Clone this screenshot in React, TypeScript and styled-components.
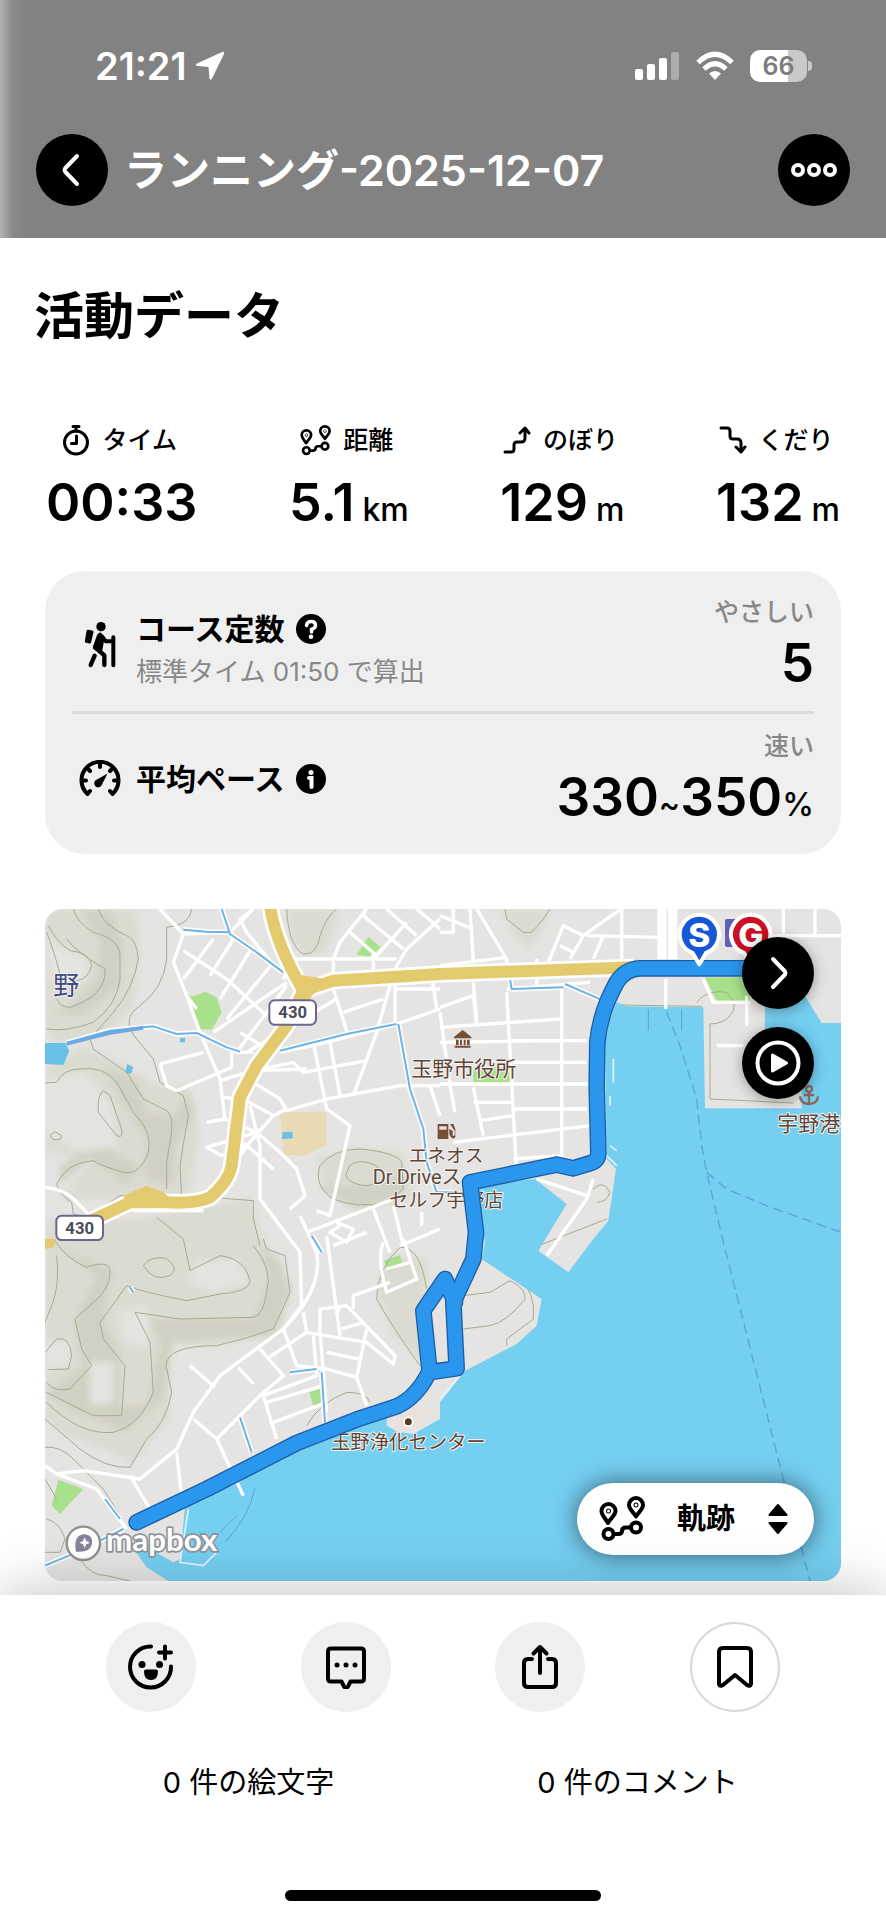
import React from 'react';
import styled, { createGlobalStyle } from 'styled-components';

const GlobalStyle = createGlobalStyle`
  * { box-sizing: border-box; }
  body {
    margin: 0;
    background: #fff;
    color: #000;
    font-family: Inter, "Noto Sans CJK JP", sans-serif;
  }
  button, select { font-family: inherit; color: inherit; }
`;

const Page = styled.div`
  display: flex;
  flex-direction: column;
  min-height: 100vh;
`;

const Header = styled.header`
  padding: 48px 0 32px;
  color: #fff;
  background: linear-gradient(90deg, #b4b4b4 0, #8c8c8c 12px, #828282 24px);
`;

const StatusBar = styled.div`
  display: flex;
  align-items: center;
  justify-content: space-between;
  height: 36px;
  padding: 0 74px 0 95px;
`;

const StatusGroup = styled.div<{ $gap: number }>`
  display: flex;
  align-items: center;
  gap: ${(p) => p.$gap}px;
`;

const Clock = styled.time`
  font-size: 38px;
  line-height: 36px;
  font-weight: 600;
`;

const Battery = styled.div`
  display: flex;
  align-items: center;
  gap: 1px;
`;

const BatteryBody = styled.div`
  width: 57px;
  border-radius: 10px;
  background: linear-gradient(90deg, #fff 66%, #c9c9c9 66%);
  color: #7c7c7c;
  font-size: 25px;
  line-height: 32px;
  font-weight: 600;
  text-align: center;
`;

const BatteryNub = styled.div`
  width: 4px;
  height: 10px;
  border-radius: 0 4px 4px 0;
  background: #c9c9c9;
`;

const TitleBar = styled.div`
  display: flex;
  align-items: center;
  gap: 16px;
  margin-top: 50px;
  padding: 0 36px;
`;

const ActivityName = styled.h1`
  flex: 1;
  margin: 0;
  font-size: 43px;
  line-height: 56px;
  font-weight: 600;
  white-space: nowrap;
`;

const RoundButton = styled.button`
  display: flex;
  flex: none;
  align-items: center;
  justify-content: center;
  width: 72px;
  height: 72px;
  padding: 0;
  border: 0;
  border-radius: 50%;
  background: #000;
`;

const Main = styled.main`
  flex: 1;
  padding: 48px 0 13px;
`;

const SectionTitle = styled.h2`
  margin: 0 34px;
  font-size: 50px;
  line-height: 60px;
  font-weight: 700;
`;

const Metrics = styled.dl`
  display: flex;
  justify-content: space-between;
  margin: 76px 46px 38px;
`;

const Metric = styled.div`
  display: flex;
  flex-direction: column;
  align-items: center;
  gap: 15px;
`;

const MetricLabel = styled.dt`
  display: flex;
  align-items: center;
  gap: 12px;
  padding-right: 4px;
  font-size: 25px;
  line-height: 36px;
  font-weight: 500;
`;

const MetricValue = styled.dd`
  margin: 0;
  font-size: 52px;
  line-height: 60px;
  font-weight: 600;
  white-space: nowrap;
`;

const Unit = styled.span<{ $spaced?: boolean }>`
  margin-left: ${(p) => (p.$spaced ? 8 : 0)}px;
  font-size: 32px;
  line-height: 30px;
  font-weight: 500;
`;

const Card = styled.section`
  margin: 0 45px;
  padding: 9px 27px;
  border-radius: 40px;
  background: #efefef;
`;

const CardRow = styled.div`
  display: flex;
  align-items: center;
  justify-content: space-between;
  padding: 16px 0 18px;

  & + & { border-top: 3px solid #dadada; }
`;

const RowLead = styled.div`
  display: flex;
  align-items: center;
  gap: 15px;
  padding-left: 7px;
`;

const IconSlot = styled.span`
  display: flex;
  justify-content: center;
  width: 42px;
`;

const RowHeading = styled.div`
  display: flex;
  align-items: center;
  gap: 11px;
  font-size: 30px;
  line-height: 36px;
  font-weight: 700;
`;

const RowNote = styled.div`
  padding-top: 7px;
  color: #888;
  font-size: 26px;
  line-height: 36px;
`;

const RowText = styled.div<{ $stacked?: boolean }>`
  padding-top: ${(p) => (p.$stacked ? 12 : 0)}px;
`;

const HelpButton = styled.button`
  display: flex;
  padding: 0;
  border: 0;
  background: none;
`;

const RowResult = styled.div`
  display: flex;
  flex-direction: column;
  align-items: flex-end;
  gap: 5px;
`;

const Rating = styled.span`
  color: #888;
  font-size: 25px;
  line-height: 32px;
  font-weight: 500;
`;

const RowValue = styled.span`
  font-size: 53px;
  line-height: 60px;
  font-weight: 600;
`;

const MapPanel = styled.section`
  position: relative;
  height: 672px;
  margin: 55px 45px 0;
  border-radius: 18px;
  overflow: hidden;
  background: #e5e4e0;
`;

const MapDrawing = styled.svg`
  display: block;
  width: 100%;
  height: 100%;
`;

const MapButtons = styled.div`
  position: absolute;
  top: 28px;
  right: 27px;
  display: flex;
  flex-direction: column;
  gap: 18px;

  ${RoundButton} { box-shadow: 0 2px 14px rgba(0, 0, 0, 0.35); }
`;

const LayerPicker = styled.label`
  position: absolute;
  right: 27px;
  bottom: 26px;
  display: flex;
  align-items: center;
  justify-content: space-between;
  width: 237px;
  height: 72px;
  padding: 0 26px 0 22px;
  border-radius: 36px;
  background: #fff;
  box-shadow: 0 0 24px rgba(0, 0, 0, 0.55);
`;

const LayerSelect = styled.select`
  appearance: none;
  padding: 0;
  border: 0;
  background: none;
  font-size: 29px;
  line-height: 40px;
  font-weight: 700;
`;

const Footer = styled.footer`
  position: relative;
  display: flex;
  flex-direction: column;
  align-items: center;
  padding: 27px 54px 19px;
  background: #fff;
  box-shadow: 0 0 56px rgba(0, 0, 0, 0.26);
`;

const Actions = styled.div`
  display: grid;
  grid-template-columns: repeat(4, 1fr);
  justify-items: center;
  width: 100%;
`;

const ActionButton = styled.button<{ $outlined?: boolean }>`
  display: flex;
  align-items: center;
  justify-content: center;
  width: 90px;
  height: 90px;
  padding: 0;
  border: ${(p) => (p.$outlined ? '2px solid #d8d8d8' : '0')};
  border-radius: 50%;
  background: ${(p) => (p.$outlined ? '#fff' : '#efefef')};
`;

const Counts = styled.div`
  display: grid;
  grid-template-columns: repeat(2, 1fr);
  justify-items: center;
  width: 100%;
  margin: 51px 0 87px;
`;

const CountLink = styled.a`
  color: #000;
  font-size: 29px;
  line-height: 40px;
  text-decoration: none;
`;

const HomeIndicator = styled.div`
  width: 316px;
  height: 11px;
  border-radius: 6px;
  background: #000;
`;

const line = {
  fill: 'none',
  stroke: 'currentColor',
  strokeLinecap: 'round' as const,
  strokeLinejoin: 'round' as const,
};

const LocationArrow = () => (
  <svg width="30" height="30" viewBox="0 0 30 30" aria-hidden="true">
    <path d="M27 1 2 12.500Q-.5 14 2.500 15L13.500 16 14.500 27.500Q15.500 30 17 27.500L29 3Q29.500 0 27 1Z" fill="#fff" />
  </svg>
);

const SignalIcon = () => (
  <svg width="45" height="30" viewBox="0 0 45 30" aria-hidden="true" fill="#fff">
    <rect x="0" y="18" width="8" height="11" rx="2" />
    <rect x="12" y="13" width="8" height="16" rx="2" />
    <rect x="24" y="7" width="8" height="22" rx="2" />
    <rect x="36" y="1" width="8" height="28" rx="2" opacity="0.35" />
  </svg>
);

const WifiIcon = () => (
  <svg width="38" height="30" viewBox="0 0 38 30" aria-hidden="true">
    <g fill="none" stroke="#fff" strokeWidth="5">
      <path d="M2 11.500Q19-5 36 11.500" />
      <path d="M8 18Q19 7.500 30 18" />
    </g>
    <path d="M13 22.500Q19 17.500 25 22.500L19 29Z" fill="#fff" />
  </svg>
);

const StopwatchIcon = () => (
  <svg width="28" height="32" viewBox="0 0 28 32" aria-hidden="true" {...line} strokeWidth="3">
    <circle cx="14" cy="18.500" r="11.500" />
    <path d="M11 2.500h6M14 3v4M14.500 12v7.500H9.500" />
  </svg>
);

const RouteIcon = ({ size }: { size: number }) => (
  <svg width={size} height={size} viewBox="0 0 46 46" aria-hidden="true" {...line} strokeWidth="4">
    <path d="M9 27C6 22 2.500 19 2.500 15a7 7 0 0 1 14 0C16.500 19 12 22 9 27Z" />
    <path d="M37 20.500C34 16 30 13 30 9a7 7 0 0 1 14 0C44 13 40 16 37 20.500Z" />
    <circle cx="9.500" cy="38" r="5" />
    <circle cx="37" cy="31.500" r="5" />
    <path d="M15 38h4Q23 38 23 35 23 31.500 27 31.500h4" />
    <circle cx="9.500" cy="15" r="0.500" />
    <circle cx="37" cy="9" r="0.500" />
  </svg>
);

const ClimbIcon = () => (
  <svg width="28" height="28" viewBox="0 0 28 28" aria-hidden="true" {...line} strokeWidth="3">
    <path d="M2 26h6q3 0 3-3v-4q0-3 3-3h4q4 0 4-4V3M17 7l5-5 4 5" />
  </svg>
);

const DescentIcon = () => (
  <svg width="28" height="28" viewBox="0 0 28 28" aria-hidden="true" {...line} strokeWidth="3">
    <path d="M2 2h6q3 0 3 3v5q0 3 3 3h4q4 0 4 4v8M17 21l5 5 4-5" />
  </svg>
);

const HikerIcon = () => (
  <svg width="33" height="47" viewBox="70 67 99 141" aria-hidden="true" {...line}>
    <circle cx="121" cy="84" r="14" fill="currentColor" stroke="none" />
    <path d="M82 98 94 100 87 130 77 128Z" fill="currentColor" strokeWidth="9" />
    <path d="M116 112 124 116 118 152 104 146Z" fill="currentColor" strokeWidth="15" />
    <path d="M118 108 136 128H157M158 116V200" strokeWidth="12" />
    <path d="M106 148 131 170V199M102 171 90 199" strokeWidth="13" />
  </svg>
);

const GaugeIcon = () => (
  <svg width="42" height="38" viewBox="0 0 42 38" aria-hidden="true" {...line} strokeWidth="4">
    <path d="M8.500 34A18.500 18.500 0 1 1 33.500 34L31 31M8.500 34l2.500-3" />
    <path strokeWidth="4" d="M21 3v4M4 20.500h3M35 20.500h3M9 9l2 2M33 9l-2 2" />
    <path fill="currentColor" stroke="none" d="M28.500 13.500 18 19.500a4 4 0 1 0 5 5Z" />
  </svg>
);

const QuestionIcon = () => (
  <svg width="30" height="30" viewBox="0 0 30 30" aria-hidden="true">
    <circle cx="15" cy="15" r="15" fill="#000" />
    <path d="M10.500 11.500Q11 7.500 15 7.500 19.500 7.500 19.500 11.500 19.500 14 15.500 15.500V18" fill="none" stroke="#fff" strokeWidth="3.500" strokeLinecap="round" />
    <circle cx="15" cy="22.800" r="2.300" fill="#fff" />
  </svg>
);

const InfoIcon = () => (
  <svg width="30" height="30" viewBox="0 0 30 30" aria-hidden="true">
    <circle cx="15" cy="15" r="15" fill="#000" />
    <circle cx="15" cy="8.500" r="2.500" fill="#fff" />
    <path d="M13 14h2.500v9" fill="none" stroke="#fff" strokeWidth="4" strokeLinecap="round" />
  </svg>
);

const ReactionIcon = () => (
  <svg width="48" height="48" viewBox="0 0 48 48" aria-hidden="true" {...line} strokeWidth="4">
    <path d="M24 3.500A20.500 20.500 0 1 0 44 23.500M38 3.500v12M32 9.500h12" />
    <circle cx="15" cy="21.500" r="3.500" fill="currentColor" stroke="none" />
    <circle cx="32.500" cy="21.500" r="3.500" fill="currentColor" stroke="none" />
    <path d="M19 28.500h10Q29 35 24 35 19 35 19 28.500Z" fill="currentColor" />
  </svg>
);

const CommentIcon = () => (
  <svg width="44" height="44" viewBox="0 0 44 44" aria-hidden="true" {...line} strokeWidth="4">
    <path d="M7 3.500h30q3 0 3 3v27q0 3-3 3H26.500L24 41.500q-2 3-4 0L17.500 36.500H7q-3 0-3-3v-27q0-3 3-3Z" />
    <g fill="currentColor" stroke="none">
      <circle cx="13" cy="20" r="2.500" />
      <circle cx="22" cy="20" r="2.500" />
      <circle cx="31" cy="20" r="2.500" />
    </g>
  </svg>
);

const ShareIcon = () => (
  <svg width="44" height="46" viewBox="0 0 44 46" aria-hidden="true" {...line} strokeWidth="4">
    <path d="M14 15h-4q-4 0-4 4v20q0 4 4 4h24q4 0 4-4V19q0-4-4-4h-4M22 29V3.500M15.500 9.500 22 3l6.500 6.500" />
  </svg>
);

const BookmarkIcon = () => (
  <svg width="44" height="46" viewBox="0 0 44 46" aria-hidden="true" {...line} strokeWidth="4">
    <path d="M10 4h24q4 0 4 4v32q-1 3-4 1L22 31 10 41q-3 2-4-1V8q0-4 4-4Z" />
  </svg>
);

const hillShade = [
  'M15 30H290L300 150 280 330 200 400 60 440 15 400Z',
  'M15 510 130 440 260 500 360 560 440 560 480 700 450 880 300 900 60 900 160 780 15 760Z',
  'M15 960 300 960 480 920 640 900 660 1000 760 1160 720 1300 540 1340 390 1340 390 1560 280 1690 60 1600 15 1560Z',
  'M740 30H900L860 160 800 180 760 130Z',
  'M830 780 940 745 1090 760 1120 900 940 930 850 880Z',
  'M1380 30H1530L1500 110 1460 150 1420 110Z',
  'M1010 1170 1050 1070 1160 1080 1160 1400 1060 1310Z',
];

const hillDeep = [
  'M120 30H210L250 130 240 260 130 350 30 340 90 320 170 240 180 130Z',
  'M190 500 290 540 320 640 400 650 450 580 470 640 410 740 400 860 310 840 320 720 240 600Z',
  'M20 1020 110 1070 220 1110 190 1260 240 1360 240 1520 320 1520 360 1340 330 1260 640 1260 690 1130 650 1040 720 1080 750 1180 700 1310 400 1330 370 1500 260 1600 100 1540 15 1480 130 1400 100 1270 170 1130Z',
  'M260 860 150 780 60 860 60 800 160 730 300 800Z',
  'M840 860 1000 860 1100 820 1080 900 950 930Z',
];

const hillLight = [
  'M20 120 100 160 150 190 130 260 30 250Z',
  'M15 540 130 520 220 620 230 740 120 760 15 700Z',
  'M230 1240 320 1220 330 1350 250 1330Z',
  'M150 1390 220 1390 220 1510 150 1520Z',
  'M470 1090 590 1080 630 1150 520 1180 440 1150Z',
  'M20 1330 90 1330 90 1400 20 1410Z',
];

const contours = [
  'M100 30Q110 70 160 100 240 120 240 170V240Q230 320 160 370 80 400 20 390',
  'M175 30Q190 80 260 110 290 120 295 180 280 270 220 340L150 420 160 450 260 520 310 600 380 635Q400 650 395 700L380 790V870',
  'M25 80Q50 130 90 155 150 160 155 200 145 240 110 245L60 225Q40 150 20 100',
  'M50 300Q60 325 90 325 200 290 195 210 110 160 80 120',
  'M455 30Q450 80 380 85V180Q370 270 300 320 240 360 290 420L340 480 360 550 430 590 445 650Q430 730 420 800L425 895',
  'M15 552 50 550Q70 510 120 510 190 500 230 550L280 640Q340 700 325 760 300 830 250 820 180 800 160 785 80 790 50 855',
  'M190 575Q170 590 175 640L230 710Q250 720 245 690L210 590Z',
  'M30 710 45 698 65 710 60 722 40 722Z',
  'M50 855Q60 890 95 910L100 945 140 955 240 890 390 895 440 890 640 905 640 960 660 1040',
  'M740 30Q745 140 790 165 830 170 840 110 860 50 890 30',
  'M920 820Q930 780 980 790 1030 800 1030 840 990 870 950 855 910 840 920 820Z',
  'M840 800Q880 750 960 750 1070 760 1085 790L1090 870 1040 910Q950 930 880 900 820 860 840 800Z',
  'M1395 30 1400 60 1450 100 1475 100 1510 60 1530 30',
  'M40 1020Q80 1080 140 1105 210 1080 210 1120 210 1170 160 1210L105 1260 125 1350 155 1400 90 1470Q40 1480 20 1450',
  'M50 1070Q60 1160 35 1220L15 1270',
  'M15 1360 50 1320Q90 1310 95 1370L85 1410 25 1412',
  'M640 1040Q700 1110 680 1180 670 1250 640 1255L420 1260 285 1240 330 1330 340 1480Q300 1580 220 1600 120 1610 20 1510',
  'M310 1100Q330 1070 380 1078 420 1110 390 1130 340 1150 310 1100Z',
  'M350 955 430 1020 450 1115 540 1070Q620 1080 630 1150 620 1180 540 1185L440 1205Q310 1180 260 1160L180 1270 190 1320 255 1400 245 1550 160 1550 20 1480',
  'M670 1020 680 1050 735 1070 750 1180 700 1290Q620 1320 530 1340 380 1340 378 1400L395 1480Q380 1570 320 1620L270 1705Q200 1710 120 1650L15 1560',
  'M15 1645Q60 1640 100 1680L190 1770 240 1850',
  'M20 1860Q60 1870 75 1920L60 1960 15 1960M120 1980Q150 2030 200 2030L270 2046M15 1740 50 1800',
  'M800 1580Q840 1510 920 1480 980 1480 990 1510',
  'M1160 1170Q1140 1040 1080 1045 1010 1110 1010 1200 1060 1290 1140 1400',
  'M1270 1190 1350 1180 1410 1145Q1460 1170 1455 1200 1400 1270 1350 1280L1270 1290',
  'M1740 318 1985 322M1970 310Q2000 270 2060 280 2100 320 2070 350 2050 375 2010 375V600L2260 612',
  'M1660 870Q1690 840 1710 880 1700 910 1670 910M1495 1040 1700 960',
  'M1325 1080 1430 1130Q1490 1180 1480 1260L1400 1320V1340',
];

const minorRoads = [
  'M360 30 430 105 400 190 440 290 480 400 540 540 555 660 650 700 720 760 770 810 795 890 750 930',
  'M430 105 570 100 640 30M430 155 560 240 680 350M520 120 430 240M580 120 510 230M640 140 540 300M700 190 560 360M740 250 520 400M640 30 600 60 620 100 660 150 720 220',
  'M440 290 470 330M480 400 590 460H640M590 460 740 260M620 460 890 300M720 460 860 430 1070 375',
  'M700 460 600 400M880 270 925 410M910 340 1030 300M1050 260 1010 400 940 590M870 430 900 590M820 430 860 630 930 680 870 950 830 935',
  'M730 240 760 180 860 180H1070M880 240 880 180 900 130 980 30M1000 210V160M1065 380V210L1100 150 1200 60M970 50 1090 150M1040 30 1130 110M1130 30 1200 90M930 100 1010 170 1100 70',
  'M360 495 490 460M360 495 380 560 410 575 575 505 575 460M540 545 640 515 800 510M640 550 720 600 740 635 860 600 1080 560 1200 560M550 595 610 600 700 650M555 660 500 670M650 700 500 745 545 770 620 740 700 650 740 630',
  'M640 515 760 490 790 520 980 485M630 620 660 740 660 900 720 980 780 1060 785 1220 730 1290M610 730 700 810M660 690 600 770',
  'M1070 375 1200 330M1065 270H1200M1175 230 1190 330M1170 560 1200 650M800 1000 1060 900M780 950 830 1060Q850 1170 730 1290M1000 930 1050 1060M1060 920 1090 1040M1145 980V940M890 970 940 990 920 1030 870 1000 900 980M1080 1040 1200 990',
  'M15 865Q80 870 120 920L150 950M490 935 280 935M860 1010 900 1310M880 1040 980 1000M1030 1030Q1010 1080 1040 1180L1130 1140 1090 1020M940 1230V1190L1050 1150M1040 1110 1110 1090',
  'M730 1290 540 1430 460 1540 410 1650 300 1740 130 1715 50 1725 15 1700M50 1725 170 1770 260 1890M450 1400 525 1465M595 1405 640 1455M660 1350 730 1430 660 1490 530 1620 460 1560M730 1290 770 1400 860 1410 950 1435M790 1240 800 1300 980 1330 1060 1395 1065 1370 920 1220 840 1230 840 1300 860 1540M800 1300 680 1380M860 1360 955 1380M980 1290 950 1435 980 1520M820 1310 830 1430 670 1490 710 1620M680 1510 850 1460M700 1570 860 1510M530 1620 610 1790M410 1660 425 1790M270 1730 330 1830M905 1290 970 1270M895 1240V1220',
  'M1200 100H1240V30M1290 30 1300 190M1200 200 1400 175M1310 30 1400 180V240M1200 325 1300 290 1310 375M1200 50 1300 90M1400 280 1430 820M1300 250 1310 370M1200 385 1560 360M1200 430 1560 425M1420 490H1640M1410 425H1640M1200 555H1650M1300 565 1330 710M1300 610H1420M1420 630H1640M1320 665 1420 650M1240 730 1650 680M1565 260V780M1400 270 1650 250M1420 780 1560 770M1200 340 1230 560 1245 640',
  'M1525 190 1570 80 1630 110 1700 60 1745 30M1630 110 1590 180M1690 110 1660 180M1640 110 1860 115M1745 30V180M1870 30V180M1560 140 1600 160M1660 840 1640 900 1520 1070M1490 840 1640 890M1877 240V330M1990 240 2020 310H2130M2030 440H2110M2120 290V380M2160 110H2403M2230 30V110M2325 30V110M1490 180V260',
];

const streams = [
  'M545 30 570 105 650 160 730 220',
  'M430 92 500 98 570 100',
  'M80 432 210 395 340 382 410 405 470 402 560 445 600 458M720 455 800 435 920 405 1070 375',
  'M1075 375 1110 570 1150 690 1160 790 1190 880 1250 880',
  'M815 1010 845 1060M270 1165 280 1180',
  'M600 1555 635 1660M845 1420 855 1570M750 1420 830 1410',
  'M15 2000 110 1960 250 1890M195 1800 240 1860',
  'M1410 240 1415 270 1570 265M1575 255 1690 305',
];

const shorelines = [
  'M445 1830 420 1990 490 2000 530 1960',
  'M1200 1500 1260 1430M1720 480V550M1710 590V620M1710 740 1730 755M1700 770 1730 800',
];

const route =
  'M290 1870 500 1770 770 1632 960 1558 1070 1522Q1130 1495 1167 1420L1250 1408 1240 1210 1300 1080 1308 1000 1290 850 1550 797 1600 808 1650 793Q1676 785 1675 760L1670 560 1672 430Q1680 340 1730 250 1755 210 1800 208H2250';
const routeLoop = 'M1168 1410 1150 1235 1215 1140 1245 1210';

function ActivityMap() {
  return (
    <MapDrawing viewBox="15 30 2388 2016" preserveAspectRatio="xMidYMid slice" role="img" aria-label="活動の軌跡">
      <defs>
        <filter id="softHill">
          <feGaussianBlur stdDeviation="9" />
        </filter>
      </defs>
      <rect x="0" y="0" width="2500" height="2100" fill="#e5e4e2" />
      <g filter="url(#softHill)">
        <g fill="#dcdbd2">{hillShade.map((d) => <path key={d} d={d} />)}</g>
        <g fill="#cfcfc0" opacity="0.8">{hillDeep.map((d) => <path key={d} d={d} />)}</g>
        <g fill="#e4e4e0">{hillLight.map((d) => <path key={d} d={d} />)}</g>
      </g>
      <g fill="#a8e08b">
        <path d="M440 290 460 292 495 278 530 295 545 340 515 392 475 390Z" />
        <path d="M985 113 1022 145 990 172 950 168Z" />
        <path d="M55 1742 130 1770 60 1845 35 1820Z" />
        <path d="M1032 1085 1080 1068 1088 1098 1045 1118Z" />
        <path d="M808 1480 845 1468 850 1520 820 1522Z" />
        <path d="M1300 505H1412V552H1300Z" />
        <path d="M1995 235H2130V305H2030Z" />
      </g>
      <path d="M720 640 860 640 858 740 790 770 730 768Z" fill="#e8dab4" />
      <g fill="none" stroke="#a6ab90" strokeWidth="3">
        {contours.map((d) => <path key={d} d={d} />)}
      </g>
      <path
        d="M1730 310 1760 322 1990 325 1995 628 2285 628 2285 560 2175 400 2175 300 2295 290 2345 372 2403 372 2403 2046 385 2046 320 2005 285 1955 330 1950 400 1990 420 1980 435 1820 600 1750 740 1640 1040 1530 1040 1580 1075 1600 1120 1605 1200 1560 1200 1510 1275 1415 1430 1335 1490 1280 1505 1200 1400 1130 1325 1080 1335 1030 1310 930 1290 860 1485 840 1580 915 1495 1055 1585 1120 1660 1020 1705 965 1728 810 1700 780 1695 400Z"
        fill="#75cff1"
      />
      <g fill="none" stroke="#fff" strokeWidth="16" strokeLinejoin="round" opacity="0.9">
        {streams.map((d) => <path key={d} d={d} />)}
      </g>
      <g fill="none" stroke="#fff" strokeWidth="10" strokeLinejoin="round">
        {minorRoads.map((d) => <path key={d} d={d} />)}
      </g>
      <g fill="none" stroke="#6db4e4" strokeWidth="6" strokeLinejoin="round">
        {streams.map((d) => <path key={d} d={d} />)}
      </g>
      <g fill="#68bfe8">
        <path d="M15 432 75 432 88 455 70 498 15 495Z" />
        <path d="M262 495 280 505 272 525 256 520Z" />
        <path d="M728 700 758 698 758 718 726 720Z" />
        <path d="M420 417H435V430H420Z" />
        <path d="M80 440 80 428 210 395 310 380 310 392 210 407Z" fill="#6ca9e2" />
      </g>
      <g fill="none" stroke="#e6f3fb" strokeWidth="5">
        {shorelines.map((d) => <path key={d} d={d} />)}
      </g>
      <g fill="none" stroke="#58a4da" strokeWidth="4" strokeDasharray="30 16">
        <path d="M1880 340 1920 440 1970 600 1985 740 2000 820 2050 1030 2230 1740 2310 2046" />
        <path d="M2000 820 2060 870 2180 920 2403 1000" />
      </g>
      <path d="M1825 330V395M1925 330V395M645 1765Q630 1850 555 1930M590 1850 540 1900" fill="none" stroke="#58a4da" strokeWidth="3" />
      <path d="M1866 30V180M1898 30V180" stroke="#fff" strokeWidth="28" />
      <g fill="none" strokeLinejoin="round">
        <g stroke="#fff" strokeWidth="52">
          <path d="M690 20Q705 130 790 275L880 245 1200 225 1780 205" />
          <path d="M790 275 740 380 650 500 600 595 575 800Q565 850 510 895 470 915 380 910L270 910 100 990" />
        </g>
        <g stroke="#e4ca6e" strokeWidth="36">
          <path d="M690 20Q705 130 790 275L880 245 1200 225 1780 205" />
          <path d="M790 275 740 380 650 500 600 595 575 800Q565 850 510 895 470 915 380 910L270 910 100 990" />
        </g>
      </g>
      <path d="M765 225 860 240 800 310 770 300ZM250 890 320 860 370 880 400 905 260 920ZM15 1020H50L40 1045 15 1050Z" fill="#e4ca6e" />
      <path d="M1050 1565 1130 1530 1170 1535 1150 1570 1080 1590Z" fill="#eae2da" />
      <circle cx="1105" cy="1568" r="13" fill="#5b3a26" stroke="#fff" strokeWidth="5" />

      <g fill="#754e36">
        <path d="M1242 414 1268 393 1294 414V418H1242ZM1248 422H1256V438H1248ZM1260 422H1266V438H1260ZM1271 422H1277V438H1271ZM1281 422H1289V438H1281ZM1244 440H1292V446H1244Z" />
        <path d="M1193 675H1225V720H1193ZM1228 690 1238 695V710Q1246 715 1244 695L1230 675 1240 675 1246 690V715Q1236 725 1228 705Z" />
      </g>
      <path d="M1198 682H1220V692H1198Z" fill="#e5e4e2" />
      <g fill="none" stroke="#8a6a5a" strokeWidth="7">
        <circle cx="2307" cy="570" r="9" />
        <path d="M2307 580V615M2292 588H2322M2280 592Q2282 614 2307 615 2332 614 2334 592" />
      </g>

      <g fontFamily='Roboto, "Noto Sans CJK JP", sans-serif' fill="#5e4637" stroke="#f4f3f1" strokeWidth="6" paintOrder="stroke" strokeLinejoin="round">
        <text x="1271" y="530" fontSize="63" textAnchor="middle">玉野市役所</text>
        <text x="1218" y="790" fontSize="56" textAnchor="middle">エネオス</text>
        <text x="998" y="855" fontSize="60">Dr.Driveス</text>
        <text x="1048" y="925" fontSize="57">セルフ宇野店</text>
        <text x="1105" y="1650" fontSize="58" textAnchor="middle">玉野浄化センター</text>
        <text x="2306" y="697" fontSize="63" textAnchor="middle">宇野港</text>
        <text x="118" y="288" fontSize="78" textAnchor="end" fill="#3f4a80">野</text>
      </g>

      <g fill="#fff" stroke="#6a678c" strokeWidth="6">
        <rect x="688" y="304" width="140" height="73" rx="16" />
        <rect x="49" y="950" width="140" height="73" rx="16" />
      </g>
      <g fontFamily="Roboto, sans-serif" fontSize="50" fontWeight="700" fill="#4b4b5a" textAnchor="middle">
        <text x="758" y="358">430</text>
        <text x="119" y="1004">430</text>
      </g>

      <g fill="none" strokeLinecap="round" strokeLinejoin="round">
        <g stroke="#1c5fa6" strokeWidth="50">
          <path d={route} />
          <path d={routeLoop} />
        </g>
        <g stroke="#2b96ee" strokeWidth="42">
          <path d={route} />
          <path d={routeLoop} />
        </g>
      </g>

      <rect x="2055" y="60" width="60" height="84" rx="6" fill="#5f62b4" />
      <g stroke="#fff" strokeWidth="12" strokeLinejoin="round">
        <path d="M1978 196 1958 162A59 59 0 1 1 1998 162Z" fill="#1557d6" />
        <path d="M2132 196 2112 162A59 59 0 1 1 2152 162Z" fill="#cc0f22" />
      </g>
      <g fontFamily="Inter, sans-serif" fontSize="100" fontWeight="800" fill="#fff" textAnchor="middle">
        <text x="1978" y="143">S</text>
        <text x="2132" y="143">G</text>
      </g>

      <circle cx="130" cy="1933" r="50" fill="#fff" stroke="#8f8f8f" strokeWidth="7" />
      <path d="M108 1958Q98 1907 135 1906 160 1910 156 1935 150 1962 108 1958Z" fill="#85849a" />
      <path d="M134 1915 139 1926 150 1931 139 1936 134 1947 129 1936 118 1931 129 1926Z" fill="#fff" />
      <text x="198" y="1957" fontFamily="Lato, sans-serif" fontSize="94" fontWeight="700" fill="#fff" stroke="#8d9398" strokeWidth="10" paintOrder="stroke" strokeLinejoin="round">
        mapbox
      </text>
    </MapDrawing>
  );
}

const metrics = [
  { label: 'タイム', icon: <StopwatchIcon />, value: '00:33', unit: '' },
  { label: '距離', icon: <RouteIcon size={31} />, value: '5.1', unit: 'km' },
  { label: 'のぼり', icon: <ClimbIcon />, value: '129', unit: 'm' },
  { label: 'くだり', icon: <DescentIcon />, value: '132', unit: 'm' },
];

export default function App() {
  return (
    <Page>
      <GlobalStyle />
      <Header>
        <StatusBar>
          <StatusGroup $gap={8}>
            <Clock>21:21</Clock>
            <LocationArrow />
          </StatusGroup>
          <StatusGroup $gap={16}>
            <SignalIcon />
            <WifiIcon />
            <Battery>
              <BatteryBody>66</BatteryBody>
              <BatteryNub />
            </Battery>
          </StatusGroup>
        </StatusBar>
        <TitleBar>
          <RoundButton aria-label="戻る">
            <svg width="36" height="36" viewBox="0 0 36 36" fill="none" stroke="#fff" strokeWidth="4" strokeLinecap="round" strokeLinejoin="round">
              <path d="M23 4 11 16.500q-1 1.500 0 3L23 32" />
            </svg>
          </RoundButton>
          <ActivityName>ランニング-2025-12-07</ActivityName>
          <RoundButton aria-label="メニュー">
            <svg width="48" height="16" viewBox="0 0 48 16" fill="none" stroke="#fff" strokeWidth="4">
              <circle cx="8" cy="8" r="5" />
              <circle cx="24" cy="8" r="5" />
              <circle cx="40" cy="8" r="5" />
            </svg>
          </RoundButton>
        </TitleBar>
      </Header>

      <Main>
        <SectionTitle>活動データ</SectionTitle>
        <Metrics>
          {metrics.map((m) => (
            <Metric key={m.label}>
              <MetricLabel>
                {m.icon}
                {m.label}
              </MetricLabel>
              <MetricValue>
                {m.value}
                {m.unit && <Unit $spaced>{m.unit}</Unit>}
              </MetricValue>
            </Metric>
          ))}
        </Metrics>

        <Card>
          <CardRow>
            <RowLead>
              <IconSlot>
                <HikerIcon />
              </IconSlot>
              <RowText $stacked>
                <RowHeading>
                  コース定数
                  <HelpButton aria-label="コース定数について">
                    <QuestionIcon />
                  </HelpButton>
                </RowHeading>
                <RowNote>標準タイム 01:50 で算出</RowNote>
              </RowText>
            </RowLead>
            <RowResult>
              <Rating>やさしい</Rating>
              <RowValue>5</RowValue>
            </RowResult>
          </CardRow>
          <CardRow>
            <RowLead>
              <IconSlot>
                <GaugeIcon />
              </IconSlot>
              <RowText>
                <RowHeading>
                  平均ペース
                  <HelpButton aria-label="平均ペースについて">
                    <InfoIcon />
                  </HelpButton>
                </RowHeading>
              </RowText>
            </RowLead>
            <RowResult>
              <Rating>速い</Rating>
              <RowValue>
                330<Unit>~</Unit>350<Unit>%</Unit>
              </RowValue>
            </RowResult>
          </CardRow>
        </Card>

        <MapPanel>
          <ActivityMap />
          <MapButtons>
            <RoundButton aria-label="地図を開く">
              <svg width="36" height="36" viewBox="0 0 36 36" fill="none" stroke="#fff" strokeWidth="4" strokeLinecap="round" strokeLinejoin="round">
                <path d="M13 4 25 16.500q1 1.500 0 3L13 32" />
              </svg>
            </RoundButton>
            <RoundButton aria-label="再生">
              <svg width="46" height="46" viewBox="0 0 46 46">
                <circle cx="23" cy="23" r="20.500" fill="none" stroke="#fff" strokeWidth="4" />
                <path d="M17.500 15v16l14-8Z" fill="#fff" stroke="#fff" strokeWidth="3" strokeLinejoin="round" />
              </svg>
            </RoundButton>
          </MapButtons>
          <LayerPicker>
            <RouteIcon size={46} />
            <LayerSelect aria-label="表示する情報" defaultValue="track">
              <option value="track">軌跡</option>
            </LayerSelect>
            <svg width="20" height="32" viewBox="0 0 20 32" aria-hidden="true" strokeWidth="2" stroke="#000" strokeLinejoin="round">
              <path d="M10 2 18.500 12H1.500ZM10 30 18.500 20H1.500Z" />
            </svg>
          </LayerPicker>
        </MapPanel>
      </Main>

      <Footer>
        <Actions>
          <ActionButton aria-label="絵文字を送る">
            <ReactionIcon />
          </ActionButton>
          <ActionButton aria-label="コメントする">
            <CommentIcon />
          </ActionButton>
          <ActionButton aria-label="共有">
            <ShareIcon />
          </ActionButton>
          <ActionButton $outlined aria-label="保存">
            <BookmarkIcon />
          </ActionButton>
        </Actions>
        <Counts>
          <CountLink href="#reactions">0 件の絵文字</CountLink>
          <CountLink href="#comments">0 件のコメント</CountLink>
        </Counts>
        <HomeIndicator />
      </Footer>
    </Page>
  );
}
